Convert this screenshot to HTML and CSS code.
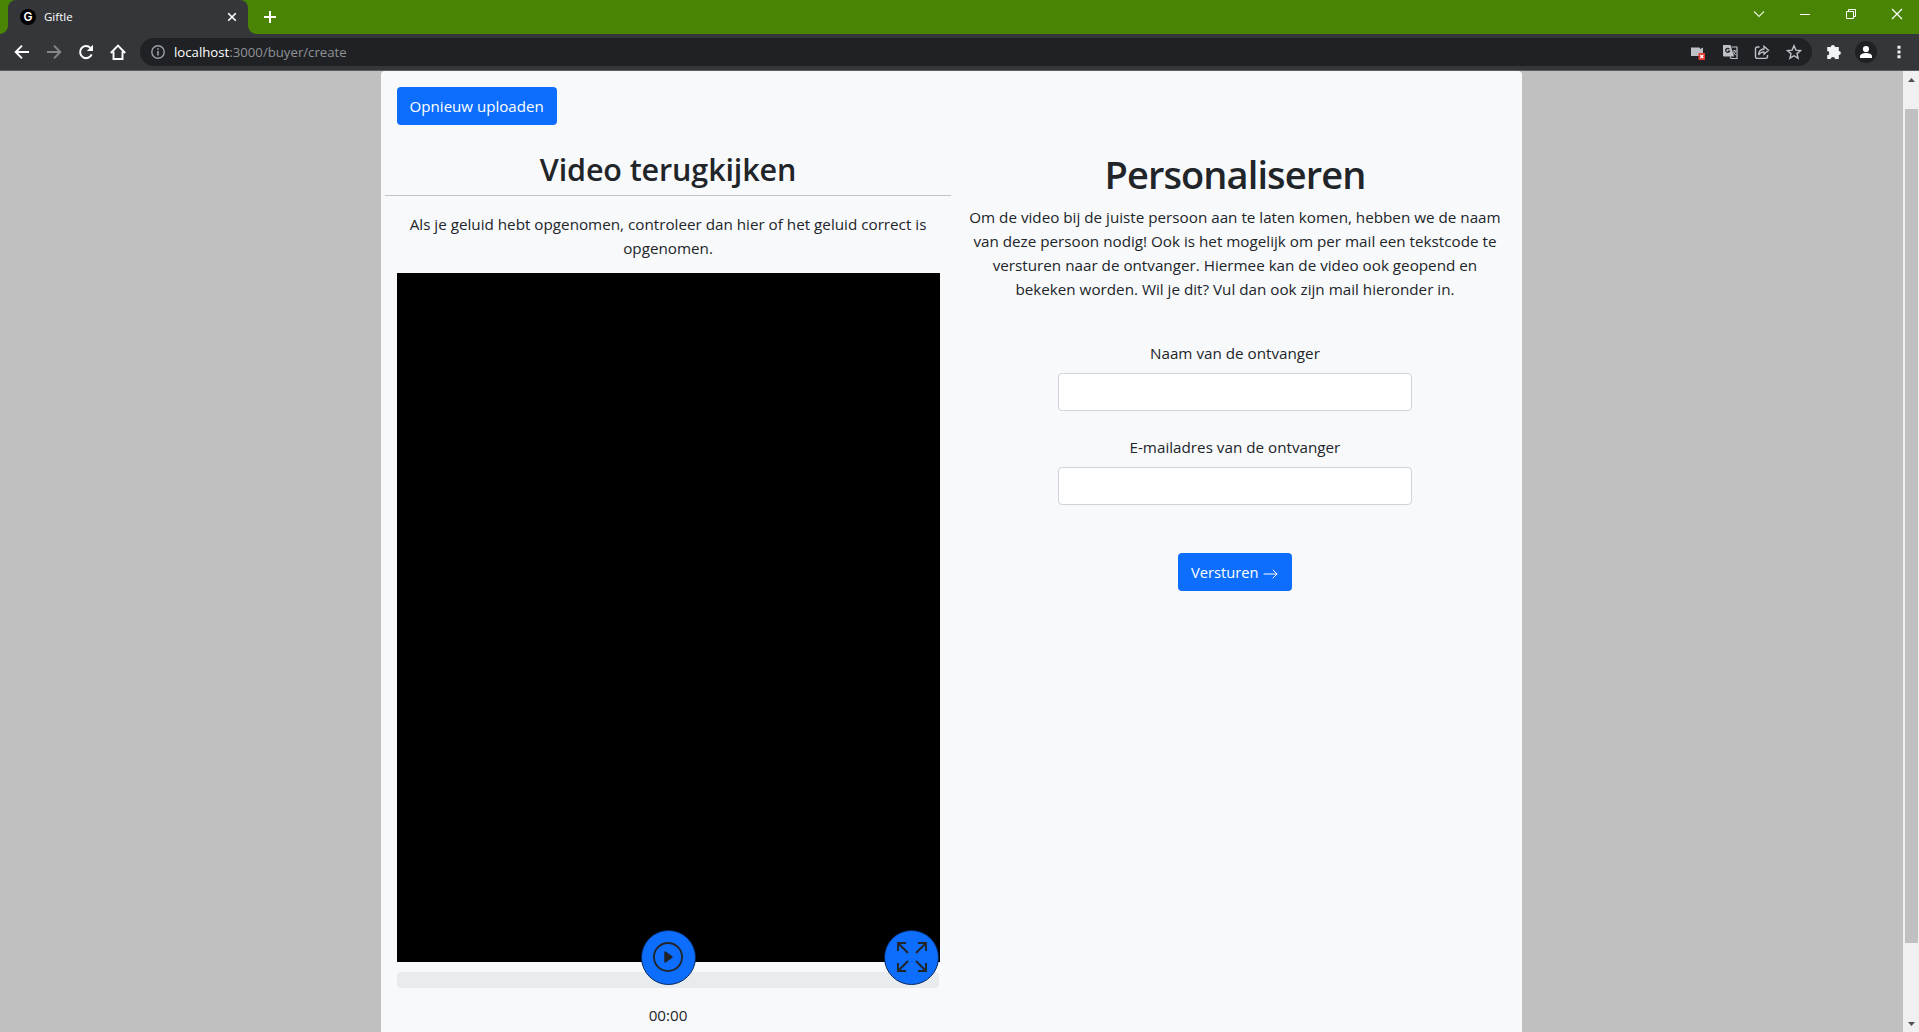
FILE: index.html
```html
<!DOCTYPE html>
<html lang="nl">
<head>
<meta charset="utf-8">
<title>Giftle</title>
<link rel="stylesheet" href="styles.css">
</head>
<body>
<header class="browser">
  <div class="tabstrip">
    <div class="tab">
      <span class="favicon">G</span>
      <span class="tab-title">Giftle</span>
      <svg class="tab-close" width="10" height="10" viewBox="0 0 10 10"><path d="M1.2 1.2l7.6 7.6M8.8 1.2L1.2 8.8" stroke="#fff" stroke-width="1.6"/></svg>
    </div>
    <svg class="new-tab" width="12" height="12" viewBox="0 0 12 12"><path d="M6 0v12M0 6h12" stroke="#fff" stroke-width="2"/></svg>
    <div class="window-controls">
      <svg width="46" height="28" viewBox="0 0 46 28"><path d="M18 11.5l5 5 5-5" fill="none" stroke="#e9f2dd" stroke-width="1.1"/></svg>
      <svg width="46" height="28" viewBox="0 0 46 28"><path d="M18 14.5h10" stroke="#fff"/></svg>
      <svg width="46" height="28" viewBox="0 0 46 28"><path d="M18.500 11.500h7v7h-7zM20.500 11.500v-2h7v7h-2" fill="none" stroke="#fff"/></svg>
      <svg width="46" height="28" viewBox="0 0 46 28"><path d="M18 9l10 10M28 9L18 19" stroke="#fff" stroke-width="1.2"/></svg>
    </div>
  </div>
  <div class="toolbar">
    <div class="nav">
      <svg width="16" height="16" viewBox="0 0 16 16"><path d="M15 8H2.500M8 1.700L1.700 8 8 14.300" fill="none" stroke="#fff" stroke-width="1.900"/></svg>
      <svg width="16" height="16" viewBox="0 0 16 16"><path d="M1 8h12.500M8 1.700L14.300 8 8 14.300" fill="none" stroke="#86878a" stroke-width="1.900"/></svg>
      <svg width="16" height="16" viewBox="0 0 16 16"><path d="M13.700 10.300A6 6 0 1 1 12.400 3.900" fill="none" stroke="#fff" stroke-width="2"/><path d="M15 .8v6.200H8.800z" fill="#fff"/></svg>
      <svg width="16" height="16" viewBox="0 0 16 16"><path d="M.8 9L8 1.700 15.200 9M3.500 7.500V15h9V7.500" fill="none" stroke="#fff" stroke-width="1.900"/></svg>
    </div>
    <div class="omnibox">
      <svg width="14" height="14" viewBox="0 0 14 14"><circle cx="7" cy="7" r="6.200" fill="none" stroke="#9aa0a6" stroke-width="1.400"/><path d="M7 6v4.500M7 3.300v1.500" stroke="#9aa0a6" stroke-width="1.600"/></svg>
      <span class="url"><b>localhost</b>:3000/buyer/create</span>
      <div class="page-actions">
        <svg width="16" height="16" viewBox="0 0 16 16"><path d="M1 3.500h8.500L10.500 5l2.500-1.500V12H1z" fill="#bdc1c6"/><path d="M8.500 9H15v7H8.500z" fill="#e5392f"/><path d="M10.300 11l3 3M13.300 11l-3 3" stroke="#fff" stroke-width="1.200"/></svg>
        <svg width="16" height="16" viewBox="0 0 16 16"><path d="M1 1h7.500l3.500 11.500H2a1 1 0 0 1-1-1z" fill="#bdc1c6"/><path d="M9.500 3H15v11.500H9L8 12.500" fill="none" stroke="#bdc1c6" stroke-width="1.200"/><path d="M7.300 5.100A2 2 0 1 0 7.600 7H5.700" fill="none" stroke="#202124" stroke-width="1.200"/><path d="M10.500 7h4M12.500 6v1M13.600 7.200c-.4 1.600-1.500 2.600-2.300 3.200M11.300 8.300l2.600 3" fill="none" stroke="#bdc1c6"/></svg>
        <svg width="16" height="16" viewBox="0 0 16 16"><path d="M5.500 3H3.200A1.700 1.700 0 0 0 1.500 4.700v8A1.700 1.700 0 0 0 3.200 14.400h8.600a1.700 1.700 0 0 0 1.700-1.700V11" fill="none" stroke="#bdc1c6" stroke-width="1.400"/><path d="M4.500 11c.2-3.800 2.200-5.700 5.500-6V2.200L14.500 6.300 10 10.300V7.800c-2.500 0-4.200 1-5.500 3.200z" fill="none" stroke="#bdc1c6" stroke-width="1.300"/></svg>
        <svg width="16" height="16" viewBox="0 0 16 16"><path d="M8 1.700l1.900 4.400 4.700.4-3.600 3.100 1.100 4.600L8 11.700l-4.100 2.500L5 9.600 1.400 6.500l4.700-.4z" fill="none" stroke="#bdc1c6" stroke-width="1.400"/></svg>
      </div>
    </div>
    <svg class="puzzle" width="16" height="16" viewBox="0 0 16 16"><path d="M1.200 3h3.600a2.100 2.100 0 1 1 4.200 0h3.800v3.900a2.100 2.100 0 1 1 0 4.200V15H9a2.100 2.100 0 0 0-4.200 0H1.200v-3.700a2.100 2.100 0 0 0 0-4.200z" fill="#f1f3f4"/></svg>
    <svg class="avatar" width="22" height="22" viewBox="0 0 22 22"><circle cx="11" cy="11" r="11" fill="#202124"/><circle cx="11" cy="8" r="3.100" fill="#fff"/><path d="M5 17v-1.700c0-2.200 3.500-3.300 6-3.300s6 1.100 6 3.300V17z" fill="#fff"/></svg>
    <svg class="dots" width="4" height="14" viewBox="0 0 4 14"><path d="M.5.800h3v3h-3zM.5 5.500h3v3h-3zM.5 10.200h3v3h-3z" fill="#f1f3f4"/></svg>
  </div>
</header>

<div class="viewport">
  <main class="page">
    <div class="card">
      <section class="col video-col">
        <button class="btn" type="button">Opnieuw uploaden</button>
        <h2>Video terugkijken</h2>
        <hr>
        <p>Als je geluid hebt opgenomen, controleer dan hier of het geluid correct is opgenomen.</p>
        <div class="player">
          <div class="screen"></div>
          <div class="progress"></div>
          <button class="round play" type="button" aria-label="Afspelen">
            <svg width="30" height="30" viewBox="0 0 16 16" fill="#212529"><path d="M8 15A7 7 0 1 1 8 1a7 7 0 0 1 0 14zm0 1A8 8 0 1 0 8 0a8 8 0 0 0 0 16z"/><path d="M6.271 5.055a.5.500 0 0 1 .52.038l3.500 2.500a.5.500 0 0 1 0 .814l-3.500 2.500A.5.500 0 0 1 6 10.500v-5a.5.500 0 0 1 .271-.445z"/></svg>
          </button>
          <button class="round full" type="button" aria-label="Volledig scherm">
            <svg width="30" height="30" viewBox="0 0 30 30" fill="none" stroke="#212529" stroke-width="1.900"><path d="M1 9V1h8M1 1l10 10M21 1h8v8M29 1L19 11M1 21v8h8M1 29l10-10M21 29h8v-8M29 29L19 19"/></svg>
          </button>
        </div>
        <div class="time">00:00</div>
      </section>
      <section class="col form-col">
        <h1>Personaliseren</h1>
        <p>Om de video bij de juiste persoon aan te laten komen, hebben we de naam van deze persoon nodig! Ook is het mogelijk om per mail een tekstcode te versturen naar de ontvanger. Hiermee kan de video ook geopend en bekeken worden. Wil je dit? Vul dan ook zijn mail hieronder in.</p>
        <form class="fields">
          <label for="naam">Naam van de ontvanger</label>
          <input id="naam" type="text">
          <label for="mail">E-mailadres van de ontvanger</label>
          <input id="mail" type="email">
          <button class="btn send" type="button">Versturen
            <svg width="16" height="16" viewBox="0 0 16 16"><path d="M1 8h13M10 4l4 4-4 4" fill="none" stroke="#fff" stroke-linecap="round" stroke-linejoin="round"/></svg>
          </button>
        </form>
      </section>
    </div>
  </main>
  <div class="scrollbar">
    <svg width="7" height="4" viewBox="0 0 7 4"><path d="M3.500 0L7 4H0z" fill="#505050"/></svg>
    <div class="thumb"></div>
    <svg width="7" height="4" viewBox="0 0 7 4"><path d="M0 0h7L3.500 4z" fill="#505050"/></svg>
  </div>
</div>
</body>
</html>
```

FILE: styles.css
```css
* { box-sizing: border-box; }

body {
  margin: 0;
  height: 100vh;
  display: flex;
  flex-direction: column;
  overflow: hidden;
  font: 15.220px/24px "Open Sans", sans-serif;
  color: #212529;
}

svg { display: block; flex: none; }

/* Browser window */
.tabstrip {
  height: 34px;
  display: flex;
  background: #4a8405;
  padding-left: 8px;
}

.tab {
  position: relative;
  width: 240px;
  display: flex;
  align-items: center;
  padding: 0 11px 0 12px;
  background: #35363a;
  border-radius: 8px 8px 0 0;
  font-size: 12px;
  line-height: 16px;
  color: #fff;
}

.tab::before,
.tab::after {
  content: "";
  position: absolute;
  bottom: 0;
  width: 8px;
  height: 8px;
}

.tab::before {
  left: -8px;
  background: radial-gradient(circle at 0 0, transparent 7.500px, #35363a 8px);
}

.tab::after {
  right: -8px;
  background: radial-gradient(circle at 100% 0, transparent 7.500px, #35363a 8px);
}

.favicon {
  width: 16px;
  height: 16px;
  margin-right: 8px;
  border-radius: 50%;
  background: #000;
  font: 600 12px/16px "Inter", sans-serif;
  text-align: center;
}

.tab-title { font-size: 11.500px; }
.tab-close { margin-left: auto; }
.new-tab { margin: 11px 0 0 16px; }

.window-controls {
  display: flex;
  margin-left: auto;
  height: 28px;
  margin-right: -1px;
}

.toolbar {
  height: 37px;
  display: flex;
  align-items: center;
  padding: 0 18px 0 14px;
  background: #35363a;
  border-bottom: 1px solid #5c5c60;
}

.nav {
  display: flex;
  gap: 16px;
  margin-right: 14px;
}

.omnibox {
  flex: 1;
  height: 28px;
  display: flex;
  align-items: center;
  padding: 0 10px 0 11px;
  border-radius: 14px;
  background: #202124;
  color: #8f9296;
  font-size: 13.2px;
}

.url { margin-left: 9px; }
.url b { font-weight: 400; color: #fff; }

.page-actions {
  display: flex;
  gap: 16px;
  margin-left: auto;
}

.puzzle { margin-left: 14px; }
.avatar { margin: 0 20px 0 13px; }

/* Page */
.viewport {
  flex: 1;
  min-height: 0;
  display: flex;
}

.page {
  flex: 1;
  background: #c0c0c0;
  display: flex;
  justify-content: center;
}

.card {
  width: 60%;
  display: flex;
  background: #f8f9fb;
  border-radius: 4px 4px 0 0;
  padding: 0 4px;
}

.col {
  width: 50%;
  display: flex;
  flex-direction: column;
  text-align: center;
}

h1, h2, p { margin: 0; }
h1, h2 { font-weight: 600; }

.btn {
  height: 38px;
  padding: 0 13px;
  border: 0;
  border-radius: 4px;
  background: #0d6efd;
  color: #fff;
  font: inherit;
  font-size: 15.100px;
  white-space: nowrap;
}

.video-col { padding-top: 16px; }

.video-col .btn {
  align-self: flex-start;
  margin-left: 12px;
  width: 160px;
}

h2 {
  margin-top: 25px;
  font-size: 30.500px;
  line-height: 38px;
  letter-spacing: -.12px;
}

hr {
  align-self: stretch;
  margin: 7px 0 16px;
  border: 0;
  height: 1px;
  background: #c4c5c8;
}

.video-col p { padding: 0 12px; }

.player {
  position: relative;
  margin: 13px 11px 0 12px;
}

.screen {
  height: 689px;
  background: #000;
}

.progress {
  height: 16px;
  margin: 10px 1px 0 0;
  border-radius: 4px;
  background: #e9ecef;
}

.round {
  position: absolute;
  top: 656.500px;
  width: 55px;
  height: 55px;
  display: grid;
  place-items: center;
  padding: 0;
  border: 1px solid #06275c;
  border-radius: 50%;
  background: #0d6efd;
}

.play { left: calc(50% - 28px); }
.full { right: 1px; }

.time { margin-top: 15px; }

.form-col { padding: 79px 12px 0; }

h1 {
  font-size: 38px;
  line-height: 48px;
  letter-spacing: -.9px;
}

.form-col p { margin-top: 7px; }

.fields {
  width: 354px;
  margin: 40px auto 0;
  display: flex;
  flex-direction: column;
}

.fields input {
  height: 38px;
  margin: 8px 0 24px;
  border: 1px solid #ced4da;
  border-radius: 4px;
  background: #fff;
}

.send {
  align-self: center;
  display: flex;
  align-items: center;
  gap: 5px;
  width: 114px;
  margin-top: 24px;
  font-size: 14.700px;
}

.send svg { margin-top: 3px; }

/* Scrollbar */
.scrollbar {
  width: 16px;
  display: flex;
  flex-direction: column;
  align-items: center;
  padding: 7px 0 6px;
  background: #f0f0f0;
}

.scrollbar svg:first-child { margin-bottom: 27px; }

.thumb {
  width: 13px;
  height: 834px;
  margin-bottom: auto;
  background: #c0c0c0;
}
```
